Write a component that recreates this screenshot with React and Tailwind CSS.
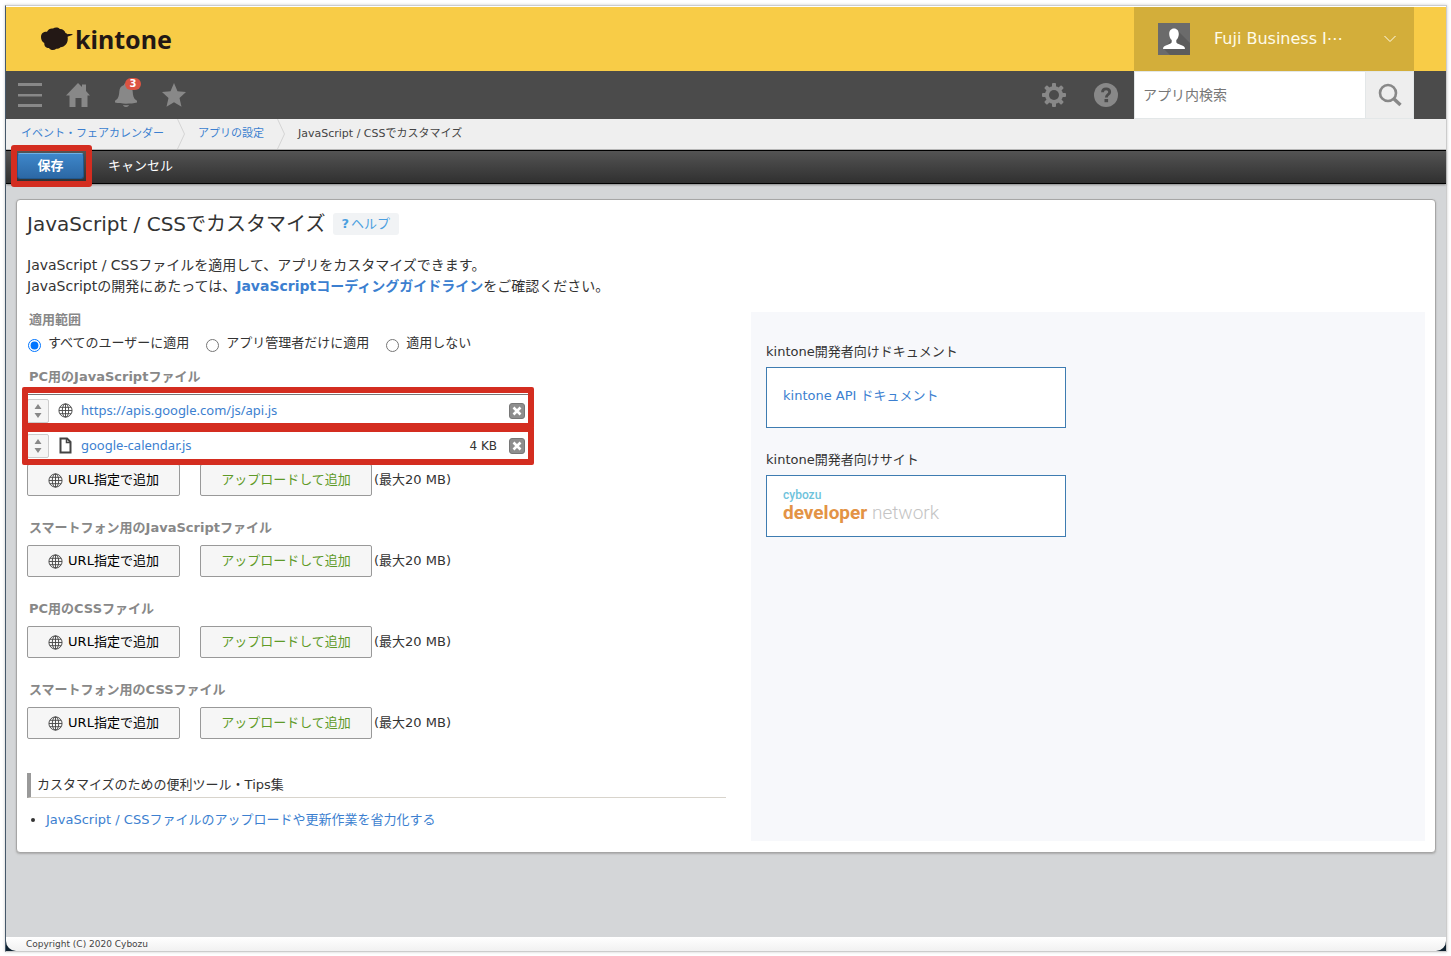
import React, { useState } from 'react';

const SCOPES = [
  { value: 'all', label: 'すべてのユーザーに適用' },
  { value: 'admin', label: 'アプリ管理者だけに適用' },
  { value: 'none', label: '適用しない' },
];

const SECTIONS = [
  {
    title: 'PC用のJavaScriptファイル',
    files: [
      { name: 'https://apis.google.com/js/api.js', type: 'url' },
      { name: 'google-calendar.js', type: 'file', size: '4 KB' },
    ],
  },
  { title: 'スマートフォン用のJavaScriptファイル', files: [] },
  { title: 'PC用のCSSファイル', files: [] },
  { title: 'スマートフォン用のCSSファイル', files: [] },
];

function GlobeIcon() {
  return (
    <svg width="15" height="15" viewBox="0 0 15 15" fill="none" stroke="#444" strokeWidth="0.9" className="shrink-0">
      <circle cx="7.5" cy="7.5" r="6.6" />
      <ellipse cx="7.5" cy="7.5" rx="3.2" ry="6.6" />
      <path d="M7.5 1v13M1 7.5h13M2 4.3h11M2 10.7h11" />
    </svg>
  );
}

function FileIcon() {
  return (
    <svg width="15" height="17" viewBox="0 0 15 17" fill="none" stroke="#444" strokeWidth="2" className="shrink-0">
      <path d="M2.500 1.500h6.500l3.500 3.500v10.500h-10z" />
      <path d="M8.500 1v4.500h4.500" strokeWidth="1.500" />
    </svg>
  );
}

function Logo() {
  return (
    <a href="#" className="flex items-center gap-[2px] text-[#231815]">
      <svg width="33" height="24" viewBox="0 0 33 24" fill="currentColor">
        <path d="M1 10C1 6.500 3.500 4.600 7 4.800C8 2 11 1 13 1.500C15 0.200 18 0.200 19.800 1.900C22.500 1.700 25 3.500 25.500 6C26.500 6.300 27 6.800 27.500 7.300C29 6.800 31 6.800 33 7.400C31 8.400 29 9 27.600 9.700C28.200 12.500 27.500 15.500 25.800 17.500C24.500 19.200 22.500 20 20.500 20.200C19.500 21.200 17.800 21.800 16.300 21.800C14 23.800 10.500 23.500 9 21C6 21 4 19 4.300 16C2 15 1 12.500 1 10Z" />
      </svg>
      <span className="font-['Noto_Sans',sans-serif] text-[25px] leading-8 font-bold">kintone</span>
    </a>
  );
}

function Header() {
  return (
    <header className="flex h-16 items-center justify-between bg-[#f8cc47] pr-8 pb-[1px] pl-[34px]">
      <Logo />
      <button className="-mb-[1px] flex h-16 w-[280px] items-center bg-[#d3ae3a] pr-[18px] pl-6 text-[#fffbe8]">
        <svg width="32" height="32" viewBox="0 0 32 32">
          <rect width="32" height="32" fill="#6b6b6b" />
          <path d="M20 8l12 12v12H12l-6-6z" fill="#5c5c5c" />
          <path d="M16 5.500c3 0 4.800 2.300 4.800 5.500c0 2.600-1.100 4.800-2.500 6v2c0 1.200 1.500 1.800 4 2.800c2.700 1 4.700 1.600 4.700 4.200H5c0-2.600 2-3.200 4.700-4.200c2.500-1 4-1.600 4-2.800v-2c-1.400-1.200-2.500-3.400-2.500-6c0-3.200 1.800-5.500 4.800-5.500z" fill="#fff" />
        </svg>
        <span className="ml-6 flex-1 text-left text-[16px] leading-6">Fuji Business I⋯</span>
        <svg width="12" height="8" viewBox="0 0 12 8" fill="none" stroke="currentColor" strokeWidth="1">
          <path d="M0.500 1l5.500 5.500L11.500 1" />
        </svg>
      </button>
    </header>
  );
}

function NavBar() {
  return (
    <nav className="flex h-12 items-center bg-[#4b4b4b] pr-8 pl-3 text-[#888]">
      <div className="flex flex-1 items-center gap-6">
        <button aria-label="メニュー">
          <svg width="24" height="24" viewBox="0 0 24 24" fill="currentColor">
            <path d="M0 0h24v3H0zM0 11h24v2.500H0zM0 21h24v3H0z" />
          </svg>
        </button>
        <button aria-label="ホーム">
          <svg width="24" height="24" viewBox="0 0 24 24" fill="currentColor">
            <path d="M12 0l4 4V1.500h4V8l4 4.500h-2.500V24h-6v-9h-6v9h-6V12.500H0z" />
          </svg>
        </button>
        <button aria-label="通知" className="relative">
          <svg width="24" height="24" viewBox="0 0 24 24" fill="currentColor">
            <path d="M12 0c1.200 0 2 .8 2 2c3 .8 4.500 3.200 4.700 6.500c.3 5 1.300 7.500 4.300 9.300v1.700c-6 1.600-16 1.600-22 0v-1.700c3-1.800 4-4.300 4.300-9.300C5.500 5.200 7 2.800 10 2c0-1.200.8-2 2-2zM9 22c2 .3 4 .3 6 0c-.4 1.300-1.500 2-3 2s-2.600-.7-3-2z" />
          </svg>
          <span className="absolute -top-[5px] left-[11px] h-3 w-4 rounded-full bg-[#dc5442] text-center text-[10px] leading-3 font-bold text-white">3</span>
        </button>
        <button aria-label="お気に入り">
          <svg width="24" height="24" viewBox="0 0 24 24" fill="currentColor">
            <path d="M12 0l3.500 8.200l8.500.8l-6.500 6l2 8.800L12 19.200l-7.500 4.600l2-8.800L0 9l8.500-.8z" />
          </svg>
        </button>
      </div>
      <button aria-label="設定" className="mr-7">
        <svg width="24" height="24" viewBox="0 0 24 24">
          <g fill="currentColor">
            <circle cx="12" cy="12" r="9" />
            <rect x="10" y="0" width="4" height="24" rx="1" />
            <rect x="10" y="0" width="4" height="24" rx="1" transform="rotate(45 12 12)" />
            <rect x="10" y="0" width="4" height="24" rx="1" transform="rotate(90 12 12)" />
            <rect x="10" y="0" width="4" height="24" rx="1" transform="rotate(135 12 12)" />
          </g>
          <circle cx="12" cy="12" r="5" fill="#4b4b4b" />
        </svg>
      </button>
      <button aria-label="ヘルプ" className="mr-4">
        <svg width="24" height="24" viewBox="0 0 24 24">
          <circle cx="12" cy="12" r="12" fill="currentColor" />
          <path d="M8.500 9.300c0-2.300 1.500-3.500 3.600-3.500c2.200 0 3.600 1.200 3.600 3.100c0 2.600-3.400 2.700-3.400 5.600" fill="none" stroke="#4b4b4b" strokeWidth="2.800" />
          <rect x="10.500" y="16" width="3.600" height="3.200" fill="#4b4b4b" />
        </svg>
      </button>
      <form className="flex h-12 w-[280px]" onSubmit={(e) => e.preventDefault()}>
        <input
          type="text"
          aria-label="アプリ内検索"
          placeholder="アプリ内検索"
          className="min-w-0 flex-1 border border-[#e3e7e8] bg-white px-2 text-[14px] text-[#333] placeholder:text-[#777]"
        />
        <button aria-label="検索" className="flex w-12 items-center justify-center border-y border-r border-[#e3e7e8] bg-[#eee]">
          <svg width="24" height="24" viewBox="0 0 24 24" fill="none" stroke="currentColor">
            <circle cx="10" cy="10" r="8" strokeWidth="2.600" />
            <path d="M15.500 15.500l7 6.500" strokeWidth="3.400" />
          </svg>
        </button>
      </form>
    </nav>
  );
}

function CrumbArrow() {
  return (
    <svg width="8" height="30" viewBox="0 0 8 30" fill="none" stroke="#d4d4d4" className="mx-[13px]">
      <path d="M0.500 0l7 15l-7 15" />
    </svg>
  );
}

function Breadcrumb() {
  return (
    <div className="flex h-[31px] items-center border-b border-[#bbb] bg-[#efefef] pl-[15px] text-[11px] leading-4 text-[#444]">
      <a href="#" className="text-[#3c7fd0]">イベント・フェアカレンダー</a>
      <CrumbArrow />
      <a href="#" className="text-[#3c7fd0]">アプリの設定</a>
      <CrumbArrow />
      <span>JavaScript / CSSでカスタマイズ</span>
    </div>
  );
}

function ActionBar() {
  return (
    <div className="relative flex h-[34px] items-center border-y border-black bg-linear-to-b from-[#545454] to-[#303030] pb-[2px] pl-[11px] text-white shadow-[0_1px_2px_#888]">
      <button className="flex h-[26px] w-[67px] items-center justify-center rounded-[3px] border border-[#20588f] border-t-[#6fb0e6] bg-linear-to-b from-[#3e87ca] to-[#2c68a5] text-[13px] leading-5 font-bold">保存</button>
      <button className="ml-6 text-[13px] leading-5">キャンセル</button>
      <div className="pointer-events-none absolute -top-[6px] left-[5px] h-[42px] w-[81px] rounded-[3px] border-6 border-[#d42d20]" />
    </div>
  );
}

function FileRow({ file }) {
  return (
    <li className="flex h-[35px] items-center border-t border-[#777] pr-[3px] pb-[3px]">
      <button aria-label="並べ替え" className="flex h-6 w-[22px] items-center justify-center rounded-[2px] border border-[#ccc] bg-[#f5f5f5]">
        <svg width="8" height="14" viewBox="0 0 8 14" fill="#888">
          <path d="M4 0l3.500 5h-7zM4 14l3.500-5h-7z" />
        </svg>
      </button>
      <span className="ml-[9px] flex w-[23px]">{file.type === 'url' ? <GlobeIcon /> : <FileIcon />}</span>
      <a href="#" className="flex-1 font-['Noto_Sans',sans-serif] text-[#3c7fd0]">{file.name}</a>
      {file.size && <span className="mr-3 text-[12px]">{file.size}</span>}
      <button aria-label="削除">
        <svg width="16" height="16" viewBox="0 0 16 16">
          <rect x="0.500" y="0.500" width="15" height="15" rx="2.500" fill="#8e8e8e" stroke="#777" />
          <path d="M4.500 4.500l7 7M11.500 4.500l-7 7" stroke="#fff" strokeWidth="2.600" />
        </svg>
      </button>
    </li>
  );
}

function FileSection({ section }) {
  return (
    <section className="mb-[22px]">
      <h2 className="ml-[2px] text-[13px] leading-5 font-bold text-[#888]">{section.title}</h2>
      {section.files.length > 0 && (
        <div className="relative mt-[7px]">
          <ul className="w-[501px]">
            {section.files.map((file) => (
              <FileRow key={file.name} file={file} />
            ))}
          </ul>
          <div className="pointer-events-none absolute -top-[7px] -left-[5px] h-[42px] w-[512px] rounded-[2px] border-6 border-[#d42d20]" />
          <div className="pointer-events-none absolute -bottom-[1px] -left-[5px] h-[39px] w-[512px] rounded-[2px] border-6 border-[#d42d20]" />
        </div>
      )}
      <div className={`flex items-center ${section.files.length > 0 ? '' : 'mt-[7px]'}`}>
        <button className="flex h-8 w-[153px] items-center justify-center gap-[5px] rounded-[2px] border border-[#999] bg-[#f6f6f6] text-black">
          <GlobeIcon />
          URL指定で追加
        </button>
        <button className="ml-5 h-8 w-[172px] rounded-[2px] border border-[#999] bg-[#f6f6f6] text-[#5e9a28]">アップロードして追加</button>
        <span className="ml-[2px]">(最大20 MB)</span>
      </div>
    </section>
  );
}

function DocsPanel() {
  return (
    <aside className="flex-1 bg-[#f7f8fb] px-[15px] pt-[30px]">
      <p className="leading-5">kintone開発者向けドキュメント</p>
      <a href="#" className="mt-[5px] block h-[61px] w-[300px] border border-[#3e7cb1] bg-white px-4 pt-[18px] leading-5 text-[#3c7fd0]">kintone API ドキュメント</a>
      <p className="mt-[22px] leading-5">kintone開発者向けサイト</p>
      <a href="#" className="mt-[5px] block h-[62px] w-[300px] border border-[#3e7cb1] bg-white px-4 pt-3 font-['Roboto',sans-serif]">
        <span className="block text-[12px] leading-[14px] font-medium text-[#6fc3dc]">cybozu</span>
        <span className="block text-[19px] leading-[22px] text-[#c4c4c4]">
          <b className="font-bold text-[#e39345]">developer</b> <span className="font-light">network</span>
        </span>
      </a>
    </aside>
  );
}

export default function App() {
  const [scope, setScope] = useState('all');

  return (
    <div className="min-h-screen bg-white pt-[5px] pr-1 pb-1 pl-[5px] font-['DejaVu_Sans','Noto_Sans_CJK_JP',sans-serif] text-[13px] text-[#333]">
      <div className="flex min-h-[947px] flex-col border border-[#ccc] border-l-[#46586a] bg-[#0f2230] shadow-[0_0_3px_#ccc]">
        <div className="h-[1px] bg-white" />
        <Header />
        <NavBar />
        <Breadcrumb />
        <ActionBar />
        <div className="flex-1 bg-[#d4d6d8] px-[10px] pt-[15px] pb-6">
          <main className="rounded-[4px] border border-[#a6a6a6] bg-white px-[10px] pt-2 pb-[11px] shadow-[0_1px_2px_#aaa]">
            <div className="flex items-center gap-2">
              <h1 className="text-[20px] leading-8">JavaScript / CSSでカスタマイズ</h1>
              <a href="#" className="flex h-[22px] w-[66px] items-center gap-[2px] rounded-[3px] bg-[#f1f3f5] pl-2 text-[#4b9fe0]">
                <b>?</b>ヘルプ
              </a>
            </div>
            <p className="mt-[15px] text-[14px] leading-[21px]">
              JavaScript / CSSファイルを適用して、アプリをカスタマイズできます。
              <br />
              JavaScriptの開発にあたっては、
              <a href="#" className="font-bold text-[#3c7fd0]">JavaScriptコーディングガイドライン</a>
              をご確認ください。
            </p>
            <div className="mt-[15px] flex gap-[25px]">
              <div className="w-1/2 pb-[11px]">
                <fieldset className="mb-[14px]">
                  <legend className="ml-[2px] text-[13px] leading-4 font-bold text-[#888]">適用範囲</legend>
                  <div className="mt-[5px] flex gap-4">
                    {SCOPES.map((s) => (
                      <label key={s.value} className="flex items-start gap-[7px] pl-[1px] leading-5">
                        <input
                          type="radio"
                          name="scope"
                          value={s.value}
                          checked={scope === s.value}
                          onChange={() => setScope(s.value)}
                          className="mt-[6px] h-[13px] w-[13px]"
                        />
                        {s.label}
                      </label>
                    ))}
                  </div>
                </fieldset>
                {SECTIONS.map((section) => (
                  <FileSection key={section.title} section={section} />
                ))}
                <h2 className="mt-[34px] border-b border-l-4 border-b-[#d8d4cc] border-l-[#999] pl-[6px] leading-6">カスタマイズのための便利ツール・Tips集</h2>
                <ul className="mt-3 list-disc pl-[19px] leading-5">
                  <li>
                    <a href="#" className="text-[#3c7fd0]">JavaScript / CSSファイルのアップロードや更新作業を省力化する</a>
                  </li>
                </ul>
              </div>
              <DocsPanel />
            </div>
          </main>
        </div>
        <footer className="h-[14px] rounded-b-[10px] bg-linear-to-b from-white to-[#f1f1f1] pl-5 text-[9px] leading-[14px] text-[#444]">
          Copyright (C) 2020 Cybozu
        </footer>
      </div>
    </div>
  );
}
